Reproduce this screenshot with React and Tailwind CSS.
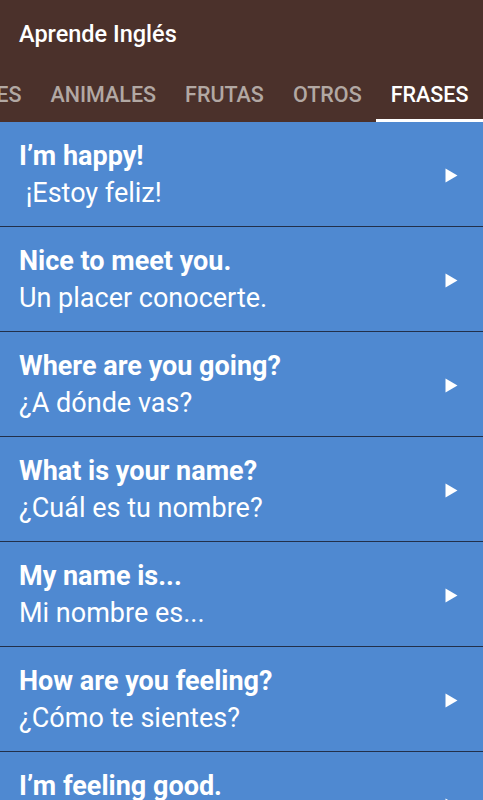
import React from "react";

const items = [
  ["I’m happy!", "\u00a0¡Estoy feliz!"],
  ["Nice to meet you.", "Un placer conocerte."],
  ["Where are you going?", "¿A dónde vas?"],
  ["What is your name?", "¿Cuál es tu nombre?"],
  ["My name is...", "Mi nombre es..."],
  ["How are you feeling?", "¿Cómo te sientes?"],
  ["I’m feeling good.", "Me siento bien."],
];

const tabs = ["COLORES", "ANIMALES", "FRUTAS", "OTROS", "FRASES"];

function Play() {
  return (
    <svg width="13" height="15" viewBox="0 0 13 15" className="shrink-0">
      <path d="M0.5 0.5 L12.5 7.5 L0.5 14.5 Z" fill="#ffffff" />
    </svg>
  );
}

export default function App() {
  return (
    <div
      className="w-[483px] h-[800px] overflow-hidden bg-[#4f89d1]"
      style={{ fontFamily: "Roboto, 'Liberation Sans', sans-serif" }}
    >
      <div className="bg-[#4b312b] h-[122px] flex flex-col">
        <div className="h-[65px] flex items-center pl-[19px] pt-[4px]">
          <span className="text-white text-[23.5px] font-medium">Aprende Inglés</span>
        </div>
        <div className="flex-1 flex justify-end overflow-hidden">
          {tabs.map((t) => (
            <div
              key={t}
              className={
                "shrink-0 flex items-center px-[14.5px] text-[21.5px] font-medium border-b-[3px] " +
                (t === "FRASES"
                  ? "text-white border-white"
                  : "text-[#b2a8a3] border-transparent")
              }
            >
              <span className="pt-[7px]">{t}</span>
            </div>
          ))}
        </div>
      </div>
      <div className="flex flex-col">
        {items.map(([en, es]) => (
          <div
            key={en}
            className="flex items-center justify-between pt-[16px] pb-[14px] pl-[19px] pr-[25px] border-b border-[#22304a]"
          >
            <div className="flex flex-col text-white text-[27px] leading-[37px]">
              <span className="font-bold">{en}</span>
              <span>{es}</span>
            </div>
            <Play />
          </div>
        ))}
      </div>
    </div>
  );
}
